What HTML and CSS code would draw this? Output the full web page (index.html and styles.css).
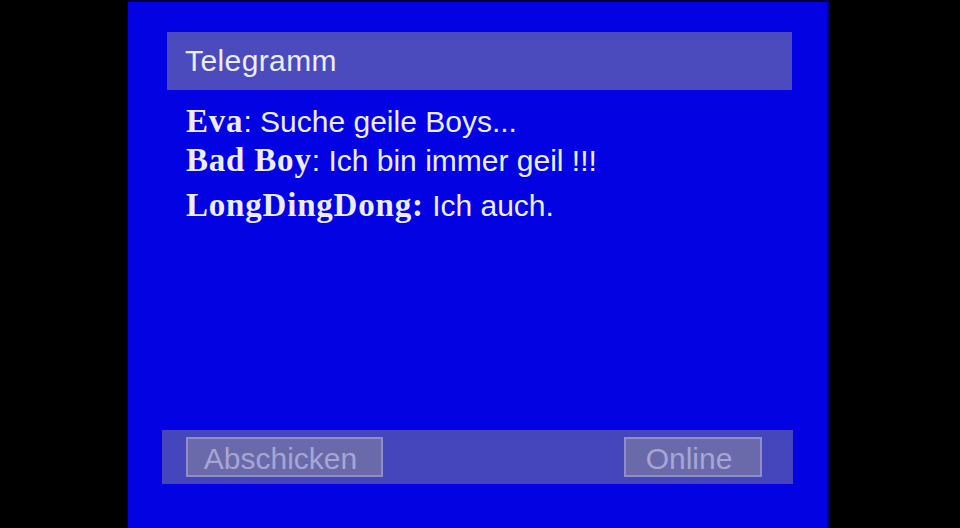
FILE: index.html
```html
<!DOCTYPE html>
<html>
<head>
<title>Telegramm</title>
<link rel="stylesheet" href="styles.css">
</head>
<body>
<div class="screen">
	<div class="titlebar">Telegramm</div>

	<div class="chat">
		<p class="line"><b class="nick">Eva</b>: Suche geile Boys...</p>
		<p class="line"><b class="nick">Bad Boy</b>: Ich bin immer geil !!!</p>
		<p class="line last"><b class="nick">LongDingDong:</b> Ich auch.</p>
	</div>

	<div class="bottombar">
		<div class="btn send">Abschicken</div>
		<div class="btn online">Online</div>
	</div>
</div>
</body>
</html>
```

FILE: styles.css
```css
html, body { margin: 0; padding: 0; background-color: #000; }
body { height: 528px; overflow: hidden; font-family: "Liberation Sans", Arial, sans-serif; }

.screen { margin-left: 128px; width: 699px; height: 526px; border-top: 2px solid #00002e; background-color: #0202e2; display: flex; flex-direction: column; box-shadow: 2px 0 2px #0000a0; }

.titlebar { margin: 30px 0 0 39px; width: 607px; height: 58px; padding-left: 18px; background-color: #4b4bbd; color: #ececf6; font-size: 30px; line-height: 58px; letter-spacing: 0.4px; }

.chat { margin: 12px 0 0 58px; color: #ececf6; }
.line { margin: 0; font-size: 30px; line-height: 38px; white-space: nowrap; }
.line.last { margin-top: 6px; }
.nick { font-family: "Liberation Serif", "Times New Roman", serif; font-size: 33px; font-weight: bold; letter-spacing: 0.8px; }

.bottombar { margin: auto 0 44px 34px; width: 631px; height: 54px; background-color: #4646bc; display: flex; align-items: center; justify-content: space-between; padding: 0 31px 0 24px; box-sizing: border-box; }

.btn { height: 40px; box-sizing: border-box; border: 2px solid #8e8ec8; background-color: #6a6aaa; color: #a6a6d6; font-size: 30px; line-height: 39px; text-align: center; padding-right: 8px; }
.send { width: 197px; }
.online { width: 138px; }
```
